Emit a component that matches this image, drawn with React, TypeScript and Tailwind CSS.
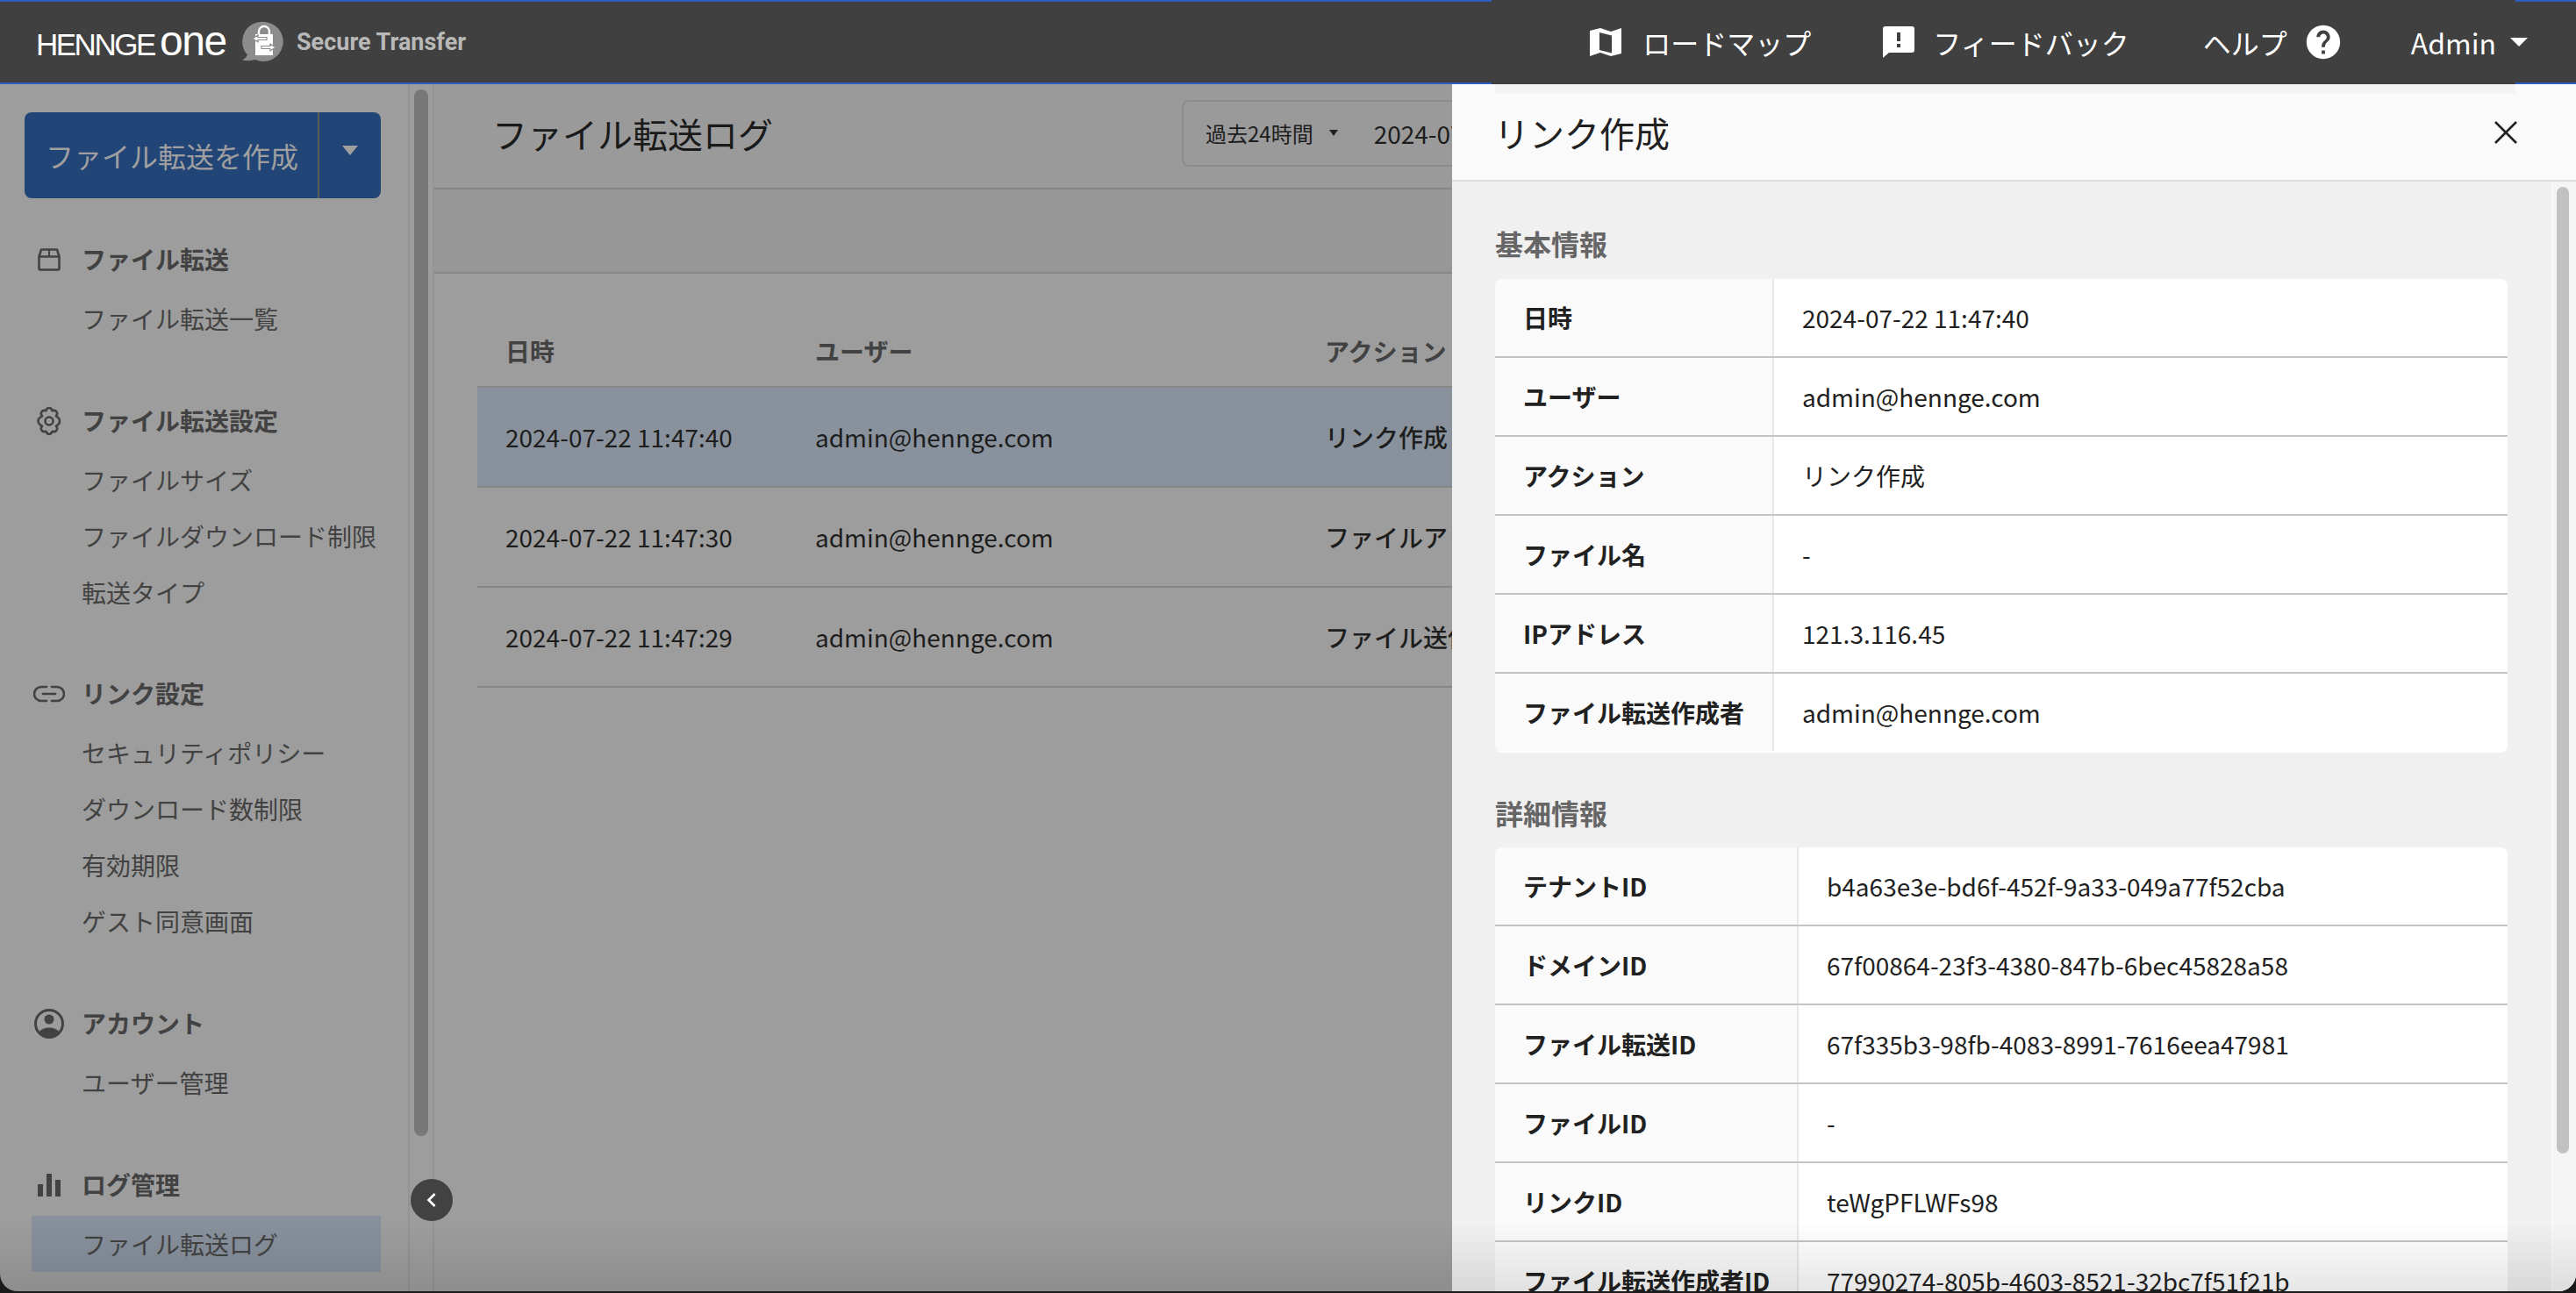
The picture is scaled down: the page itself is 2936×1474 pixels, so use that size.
import React from "react";
import { MdHelp, MdChevronLeft } from "react-icons/md";

const jp = "font-['Noto_Sans_CJK_JP','Noto_Sans',sans-serif]";

function Caret({ className }: { className: string }) {
  return <span className={"inline-block border-x-transparent border-t-current border-b-0 border-solid " + className} />;
}

function BoxIcon() {
  return (
    <svg viewBox="0 0 28 28" className="w-7 h-7" fill="none" stroke="#424242" strokeWidth="2.6" strokeLinejoin="round">
      <path d="M2.5 10.5h23V24a1.5 1.5 0 0 1-1.5 1.5H4A1.5 1.5 0 0 1 2.5 24z" />
      <path d="M2.5 10.5 5 2.5h18l2.5 8" />
      <path d="M14 2.5v8" strokeWidth="2" />
    </svg>
  );
}

function GearIcon() {
  return (
    <svg viewBox="0 0 34 34" className="w-[34px] h-[34px]" fill="none" stroke="#424242" strokeWidth="2.6" strokeLinejoin="round">
      <path d="M17 2c2 0 3 1 3.6 3.2 2.2-.7 3.8-.5 5 1.3 1.1 1.8.8 3.2-.7 4.8 2.4 1.2 4.1 3 4.1 5.7s-1.700 4.500-4.100 5.700c1.500 1.600 1.800 3 .7 4.800-1.200 1.800-2.800 2-5 1.300C20 30.300 19 32 17 32s-3-1.700-3.600-3.200c-2.200.7-3.800.5-5-1.300-1.100-1.800-.8-3.200.7-4.800C6.700 21.500 4.500 19.700 4.500 17s2.200-4.500 4.600-5.700C7.600 9.700 7.300 8.300 8.400 6.500c1.200-1.800 2.800-2 5-1.300C14 3 15 2 17 2z" />
      <circle cx="17" cy="17" r="4.500" />
    </svg>
  );
}

function LinkIcon() {
  return (
    <svg viewBox="0 0 36 20" className="w-9 h-5" fill="none" stroke="#424242" strokeWidth="2.6" strokeLinecap="round">
      <path d="M15 2H9a8 8 0 0 0 0 16h6" />
      <path d="M21 2h6a8 8 0 0 1 0 16h-6" />
      <path d="M11 10h14" />
    </svg>
  );
}

function AccountIcon() {
  return (
    <svg viewBox="0 0 34 34" className="w-[34px] h-[34px]">
      <circle cx="17" cy="17" r="15.500" fill="none" stroke="#424242" strokeWidth="3" />
      <circle cx="17" cy="12" r="5.500" fill="#424242" />
      <path d="M5.500 26.500C8 23 12 21.500 17 21.500S26 23 28.500 26.500A15 15 0 0 1 17 32a15 15 0 0 1-11.500-5.500z" fill="#424242" />
    </svg>
  );
}

function BarsIcon() {
  return (
    <svg viewBox="0 0 26 26" className="w-[26px] h-[26px]" fill="#424242">
      <rect x="0" y="12" width="6" height="14" />
      <rect x="10" y="0" width="6" height="26" />
      <rect x="20" y="7" width="6" height="19" />
    </svg>
  );
}

function SideHead({ icon, label }: { icon: React.ReactNode; label: string }) {
  return (
    <div className="flex items-center h-[70px]">
      <div className="w-[40px] flex justify-center shrink-0">{icon}</div>
      <span className="ml-[17px] pb-[2px] text-[28px] font-bold text-[#424242] leading-none">{label}</span>
    </div>
  );
}

function SideItem({ label, active }: { label: string; active?: boolean }) {
  return (
    <div className={"h-16 w-[398px] flex items-center pl-[57px] text-[28px] text-[#424242] leading-none " + (active ? "bg-[#87909b]" : "")}>
      {label}
    </div>
  );
}

function Group({ children, gap }: { children: React.ReactNode; gap: string }) {
  return <div className={"flex flex-col " + gap}>{children}</div>;
}

function Sidebar() {
  return (
    <aside className="w-[495px] shrink-0 h-full flex border-r-2 border-[#949494] relative">
      <div className="w-[467px] shrink-0 pt-[32px] pl-[28px] border-r-2 border-[#939393]">
        <div className="w-[406px] h-[98px] rounded-lg bg-[#224577] flex items-center text-[#9f9f9f]">
          <div className="w-[336px] pl-6 text-[32px] leading-none border-r-2 border-[#5c5c5c] h-full flex items-center">ファイル転送を作成</div>
          <div className="flex-1 flex justify-center pb-3">
            <Caret className="border-x-[9px] border-t-[11px] text-[#9f9f9f]" />
          </div>
        </div>
        <div className="mt-[35px] ml-[8px] flex flex-col">
          <Group gap="mb-[50px]">
            <SideHead icon={<BoxIcon />} label="ファイル転送" />
            <SideItem label="ファイル転送一覧" />
          </Group>
          <Group gap="mb-[49px]">
            <SideHead icon={<GearIcon />} label="ファイル転送設定" />
            <SideItem label="ファイルサイズ" />
            <SideItem label="ファイルダウンロード制限" />
            <SideItem label="転送タイプ" />
          </Group>
          <Group gap="mb-[50px]">
            <SideHead icon={<LinkIcon />} label="リンク設定" />
            <SideItem label="セキュリティポリシー" />
            <SideItem label="ダウンロード数制限" />
            <SideItem label="有効期限" />
            <SideItem label="ゲスト同意画面" />
          </Group>
          <Group gap="mb-[50px]">
            <SideHead icon={<AccountIcon />} label="アカウント" />
            <SideItem label="ユーザー管理" />
          </Group>
          <Group gap="">
            <SideHead icon={<BarsIcon />} label="ログ管理" />
            <SideItem label="ファイル転送ログ" active />
          </Group>
        </div>
      </div>
      <div className="flex-1 pt-[6px] pl-[5px]">
        <div className="w-4 h-[1193px] rounded-full bg-[#787878]" />
      </div>
      <div className="absolute left-[468px] top-[1248px] w-12 h-12 rounded-full bg-[#424242] flex items-center justify-center text-white">
        <MdChevronLeft size={32} />
      </div>
    </aside>
  );
}

const logs = [
  { t: "2024-07-22 11:47:40", a: "リンク作成", active: true },
  { t: "2024-07-22 11:47:30", a: "ファイルアップロード" },
  { t: "2024-07-22 11:47:29", a: "ファイル送信" },
];

function LogRow({ t, a, active }: { t: string; a: string; active?: boolean }) {
  return (
    <div className={"h-[114px] flex items-center border-b-2 border-[#868686] text-[28px] text-[#1d1d1d] leading-none " + (active ? "bg-[#89929c] border-[#7d8690]" : "")}>
      <div className="w-[384px] pl-[32px] shrink-0">{t}</div>
      <div className="w-[582px] pl-[1px] shrink-0">admin@hennge.com</div>
      <div className="whitespace-nowrap font-medium">{a}</div>
    </div>
  );
}

function Main() {
  return (
    <main className="flex-1 h-full min-w-0 overflow-hidden bg-[#9d9d9d]">
      <div className="h-[120px] bg-[#9a9a9a] border-b-2 border-[#868686] flex items-center pl-[66px] pb-[7px]">
        <h1 className="w-[786px] shrink-0 text-[40px] font-normal text-[#1a1a1a] leading-none">ファイル転送ログ</h1>
        <div className="h-[76px] w-[500px] shrink-0 border-2 border-[#8b8b8b] rounded-lg flex items-center pl-[25px] whitespace-nowrap leading-none text-[#1d1d1d]">
          <span className="text-[24px]">過去24時間</span>
          <Caret className="ml-[18px] border-x-[5px] border-t-[7px] text-[#222]" />
          <span className="ml-[41px] text-[28px]">2024-07-21 11:47</span>
        </div>
      </div>
      <div className="h-[96px] bg-[#979797] border-b-2 border-[#868686]" />
      <div className="pt-[47px] pl-[49px] w-[1500px]">
        <div className="h-[83px] flex items-center border-b-2 border-[#868686] text-[28px] font-bold text-[#424242] leading-none">
          <div className="w-[384px] pl-[32px] shrink-0">日時</div>
          <div className="w-[582px] pl-[1px] shrink-0">ユーザー</div>
          <div>アクション</div>
        </div>
        {logs.map((l) => (
          <LogRow key={l.t} {...l} />
        ))}
      </div>
    </main>
  );
}

function InfoTable({ rows, labelW }: { rows: [string, string][]; labelW: string }) {
  return (
    <div className="w-[1154px] rounded-lg overflow-hidden bg-white">
      {rows.map(([k, v]) => (
        <div key={k} className="h-[90px] flex border-b-2 border-[#c4c4c4] last:border-transparent text-[28px] text-[#212121] leading-none">
          <div className={labelW + " shrink-0 bg-[#fafafa] border-r-2 border-[#e8e8e8] pl-8 flex items-center font-bold"}>{k}</div>
          <div className="flex-1 pl-8 flex items-center">{v}</div>
        </div>
      ))}
    </div>
  );
}

function Panel() {
  return (
    <section className="absolute left-[1655px] top-[96px] right-0 bottom-0 bg-[#f0f0f0] flex flex-col">
      <div className="h-[111px] shrink-0 bg-[#fafafa] border-b-2 border-[#dedede] flex items-center justify-between pl-[48px] pr-[67px] relative">
        <div className="absolute left-[49px] top-0 w-[1163px] h-[11px] bg-[#f4f4f4]" />
        <h2 className="text-[40px] font-normal text-[#212121] leading-none relative">リンク作成</h2>
        <svg viewBox="0 0 26 26" className="w-[26px] h-[26px] relative" fill="none" stroke="#212121" strokeWidth="2.600">
          <path d="M1 1l24 24M25 1 1 25" />
        </svg>
      </div>
      <div className="flex-1 min-h-0 flex overflow-hidden">
        <div className="flex-1 min-w-0 pl-[49px]">
          <h3 className="mt-[48px] h-[44px] flex items-center text-[32px] font-bold text-[#666] leading-none">基本情報</h3>
          <div className="mt-[19px]">
            <InfoTable
              labelW="w-[318px]"
              rows={[
                ["日時", "2024-07-22 11:47:40"],
                ["ユーザー", "admin@hennge.com"],
                ["アクション", "リンク作成"],
                ["ファイル名", "-"],
                ["IPアドレス", "121.3.116.45"],
                ["ファイル転送作成者", "admin@hennge.com"],
              ]}
            />
          </div>
          <h3 className="mt-[46px] h-[44px] flex items-center text-[32px] font-bold text-[#666] leading-none">詳細情報</h3>
          <div className="mt-[18px]">
            <InfoTable
              labelW="w-[346px]"
              rows={[
                ["テナントID", "b4a63e3e-bd6f-452f-9a33-049a77f52cba"],
                ["ドメインID", "67f00864-23f3-4380-847b-6bec45828a58"],
                ["ファイル転送ID", "67f335b3-98fb-4083-8991-7616eea47981"],
                ["ファイルID", "-"],
                ["リンクID", "teWgPFLWFs98"],
                ["ファイル転送作成者ID", "77990274-805b-4603-8521-32bc7f51f21b"],
              ]}
            />
          </div>
        </div>
        <div className="w-[28px] shrink-0 border-l-2 border-[#fafafa] bg-[#f5f5f5] pt-[6px] pl-[4px]">
          <div className="w-[14px] h-[1102px] rounded-full bg-[#c1c1c1]" />
        </div>
      </div>
    </section>
  );
}

function Logo() {
  return (
    <div className="flex items-center text-white">
      <div className="flex items-baseline ml-[41px] mb-[3px] w-[233px] font-['Liberation_Sans',sans-serif] leading-none whitespace-nowrap">
        <span className="text-[35px] tracking-[-2.5px] w-[141px]">HENNGE</span>
        <span className="text-[48px] tracking-[-1.5px]">one</span>
      </div>
      <svg viewBox="0 0 50 50" className="w-[50px] h-[50px]">
        <path d="M27 2a22.500 22.500 0 1 1-10 43c-4 1.300-9 1.500-15 .5 3-1.500 5-3.500 6-6A22.500 22.500 0 0 1 27 2z" fill="#8c8c8c" />
        <path d="M21 16v-3a6 6 0 0 1 12 0v3" fill="none" stroke="#fff" strokeWidth="2.400" />
        <path d="M17 16h20v24H17z" fill="#fff" />
        <path d="M14 21l6-4v2.500h10v3H20V25z M40 31l-6-4v2.500H24v3h10V35z" fill="#fff" stroke="#8c8c8c" strokeWidth="1.200" />
      </svg>
      <span className="ml-[14px] font-['Roboto',sans-serif] font-bold text-[27px] text-[#b8b8b8] leading-none whitespace-nowrap">Secure Transfer</span>
    </div>
  );
}

function MapIcon() {
  return (
    <svg viewBox="0 0 36 36" className="w-9 h-9" fill="#fff">
      <path d="M0 5l12-3 12 4 12-4v29l-12 3-12-4-12 4z M11 7v20l14 3.500V10.500z" fillRule="evenodd" />
    </svg>
  );
}

function FeedbackIcon() {
  return (
    <svg viewBox="0 0 36 36" className="w-9 h-9" fill="#fff">
      <path d="M3 0h30a3 3 0 0 1 3 3v24a3 3 0 0 1-3 3H7l-7 6V3a3 3 0 0 1 3-3z M16 7v10h4V7z M16 20v4h4v-4z" fillRule="evenodd" />
    </svg>
  );
}

function TopBar() {
  return (
    <header className="h-[96px] shrink-0 relative z-10 bg-[#404040] border-y-2 border-[#2d5cc0] flex items-center justify-between">
      <Logo />
      <nav className="flex items-center text-[32px] text-white leading-none pr-[55px]">
        <MapIcon />
        <span className="ml-[24px]">ロードマップ</span>
        <span className="ml-[82px]"><FeedbackIcon /></span>
        <span className="ml-[21px]">フィードバック</span>
        <span className="ml-[84px]">ヘルプ</span>
        <MdHelp size={46} className="ml-[18px]" />
        <span className="ml-[77px]">Admin</span>
        <Caret className="ml-[16px] border-x-[10px] border-t-[10px] text-white" />
      </nav>
      <div className="absolute left-[1700px] w-[1167px] -top-[2px] h-[2px] bg-[#404040]" />
      <div className="absolute left-[1700px] w-[1167px] -bottom-[2px] h-[2px] bg-[#404040]" />
    </header>
  );
}

export default function App() {
  return (
    <div className={"w-[2936px] h-[1474px] overflow-hidden bg-[#1a1a1a] " + jp}>
      <div className="h-[1472px] rounded-b-[20px] overflow-hidden relative flex flex-col bg-[#9d9d9d]">
        <TopBar />
        <div className="flex-1 min-h-0 flex">
          <Sidebar />
          <Main />
        </div>
        <Panel />
        <div className="absolute left-0 right-0 bottom-0 h-[80px] bg-gradient-to-b from-transparent to-black/10 pointer-events-none" />
      </div>
    </div>
  );
}
